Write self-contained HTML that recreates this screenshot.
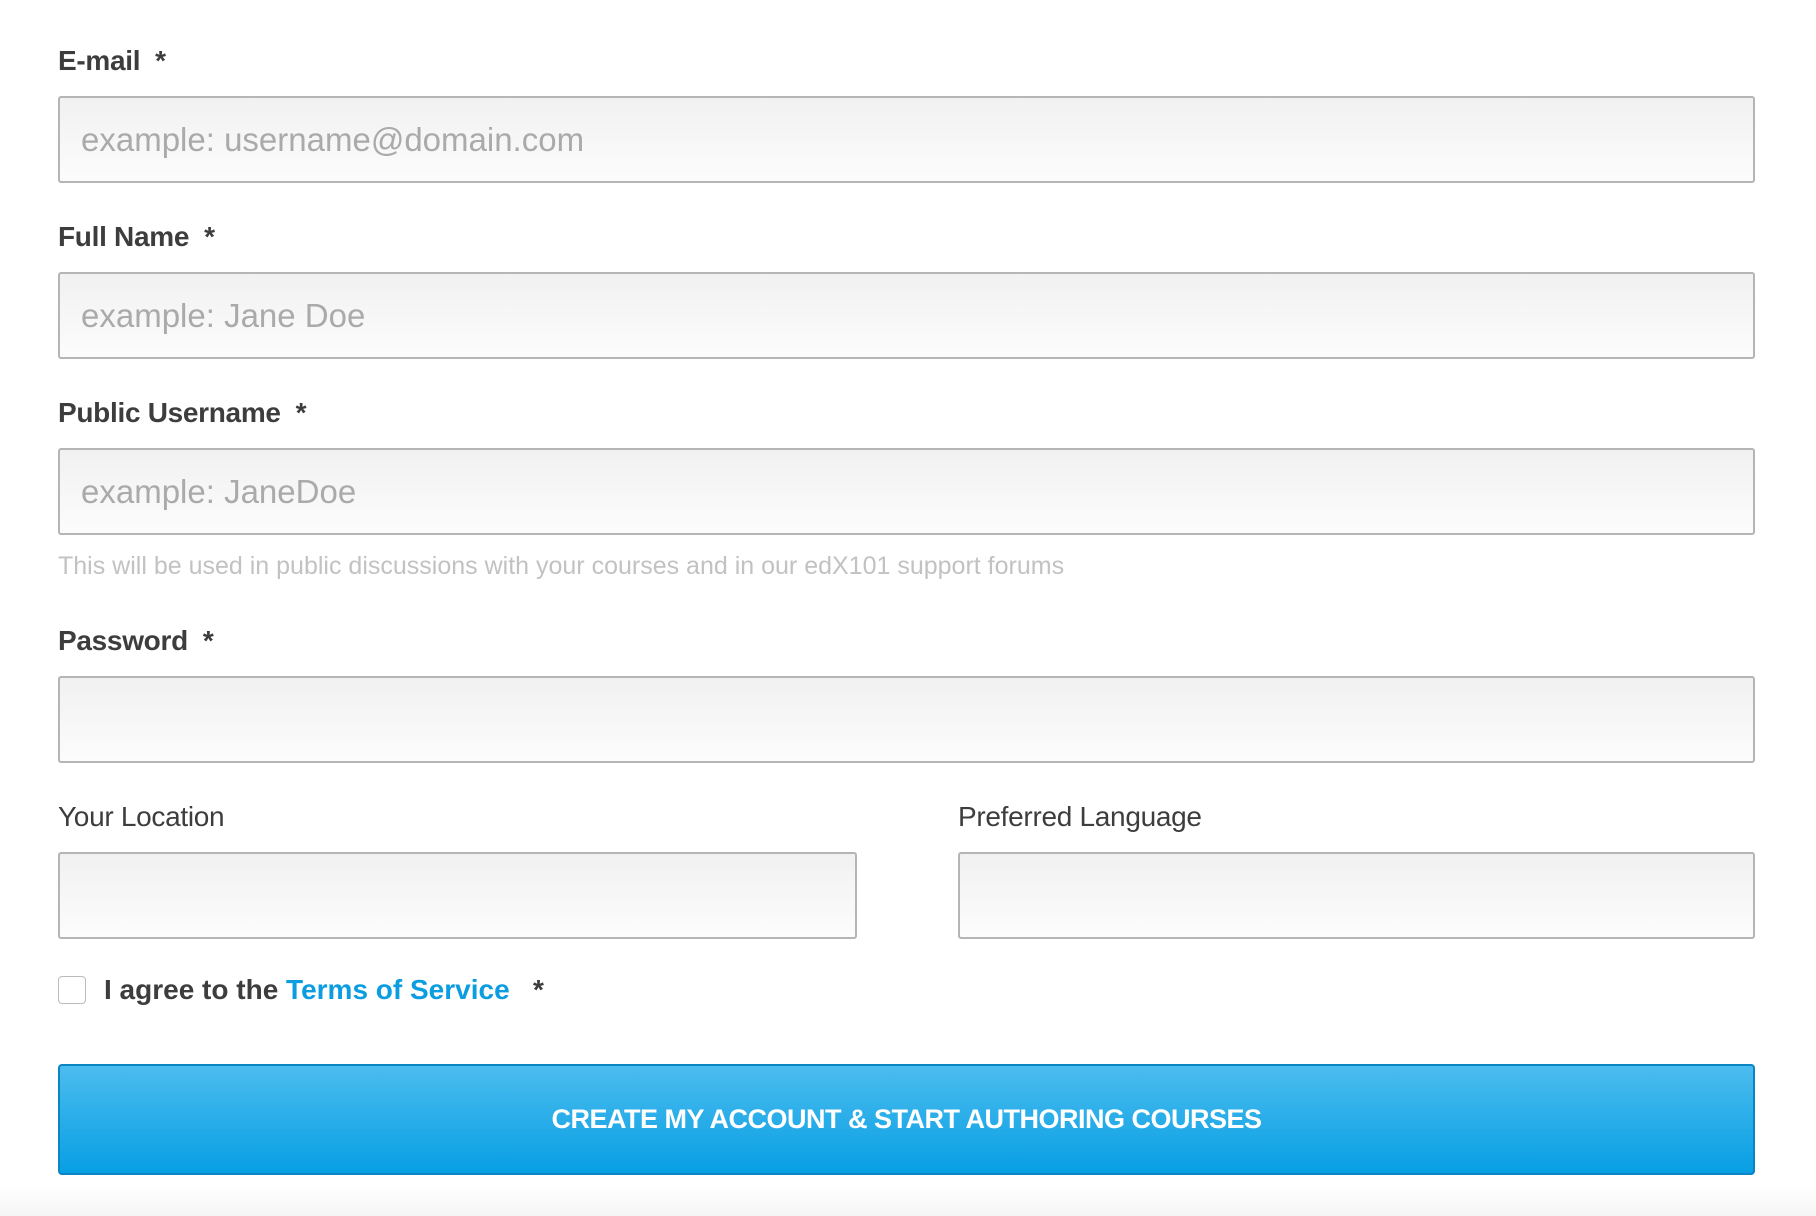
<!DOCTYPE html>
<html><head><meta charset="utf-8"><style>
body{margin:0;width:1816px;height:1216px;background:linear-gradient(#fff 0,#fff 1185px,#f5f5f5 1216px);font-family:"Liberation Sans",sans-serif;position:relative;overflow:hidden;color:#3d3d3d}
.l{position:absolute;left:58px;font-size:28px;font-weight:bold;line-height:34px;letter-spacing:-0.3px}
.n{font-weight:normal}
.i{position:absolute;left:58px;border:2px solid #b5b5b5;border-radius:3px;background:linear-gradient(#f1f1f1,#fcfcfc);font-size:33px;color:#aaa;line-height:83px;padding-left:21px;box-sizing:border-box;height:87px;width:1697px}
.h{position:absolute;left:58px;top:552px;font-size:25px;color:#c2c2c2}
.btn{position:absolute;left:58px;top:1064px;width:1697px;height:111px;box-sizing:border-box;border:2px solid #0a84c2;border-radius:4px;background:linear-gradient(#4cbcee,#079fe4);color:#fff;font-weight:bold;font-size:27px;text-align:center;line-height:107px;letter-spacing:-0.5px}
</style></head><body>
<div class="l" style="top:44px">E-mail&nbsp;&nbsp;*</div>
<div class="i" style="top:96px">example: username@domain.com</div>
<div class="l" style="top:220px">Full Name&nbsp;&nbsp;*</div>
<div class="i" style="top:272px">example: Jane Doe</div>
<div class="l" style="top:396px">Public Username&nbsp;&nbsp;*</div>
<div class="i" style="top:448px">example: JaneDoe</div>
<div class="h">This will be used in public discussions with your courses and in our edX101 support forums</div>
<div class="l" style="top:624px">Password&nbsp;&nbsp;*</div>
<div class="i" style="top:676px"></div>
<div class="l n" style="top:800px">Your Location</div>
<div class="l n" style="top:800px;left:958px">Preferred Language</div>
<div class="i" style="top:852px;width:799px"></div>
<div class="i" style="top:852px;left:958px;width:797px"></div>
<div style="position:absolute;left:58px;top:976px;width:26px;height:26px;border:1.5px solid #bbb;border-radius:4px;background:#fff"></div>
<div style="position:absolute;left:104px;top:971px;font-size:28px;line-height:38px;font-weight:bold;color:#3d3d3d">I agree to the <span style="color:#0b9de0">Terms of Service</span>&nbsp;&nbsp; *</div>
<div class="btn">CREATE MY ACCOUNT &amp; START AUTHORING COURSES</div>
</body></html>
